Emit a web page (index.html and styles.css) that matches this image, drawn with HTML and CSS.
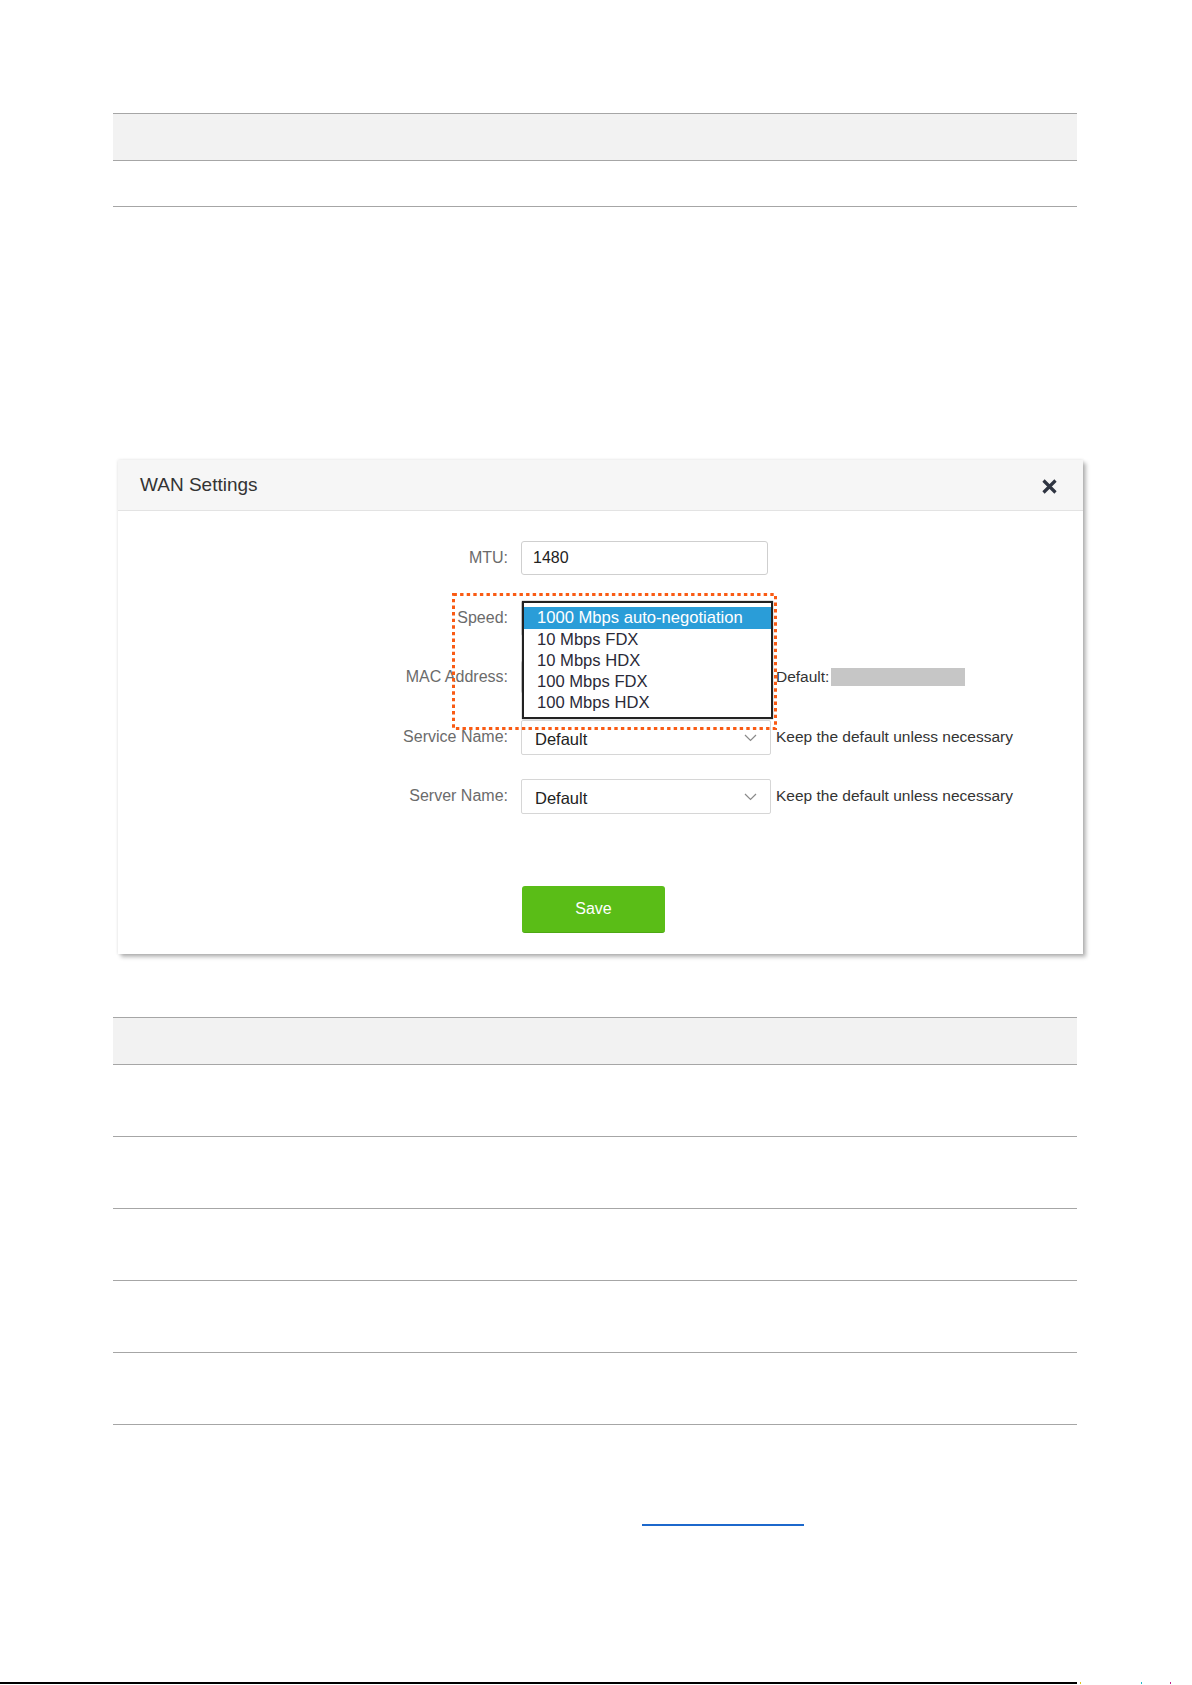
FILE: index.html
```html
<!DOCTYPE html>
<html>
<head>
    <title>WAN Settings</title>
    <meta name="viewport" content="width=device-width, initial-scale=1">
    <link rel="stylesheet" href="styles.css">
</head>
<body>
    <div class="page">
        <div class="doc-table">
            <div class="doc-head"></div>
            <div class="doc-row"></div>
        </div>

        <div class="modal">
            <div class="modal-header">
                <span class="modal-title">WAN Settings</span>
                <svg class="modal-close" width="17" height="17" viewBox="0 0 17 17">
                    <path d="M2.5 2.5L14.5 14.5M14.5 2.5L2.5 14.5"/>
                </svg>
            </div>
            <div class="modal-body">
                <div class="form-row">
                    <label class="form-label" for="mtu">MTU:</label>
                    <input class="field" type="text" id="mtu" value="1480">
                </div>
                <div class="form-row">
                    <label class="form-label">Speed:</label>
                    <div class="control">
                        <div class="select">1000 Mbps auto-negotiation</div>
                        <ul class="speed-list">
                            <li class="selected">1000 Mbps auto-negotiation</li>
                            <li>10 Mbps FDX</li>
                            <li>10 Mbps HDX</li>
                            <li>100 Mbps FDX</li>
                            <li>100 Mbps HDX</li>
                        </ul>
                    </div>
                </div>
                <div class="form-row">
                    <label class="form-label">MAC Address:</label>
                    <div class="control">
                        <div class="field"></div>
                    </div>
                    <span class="hint">Default:</span>
                    <span class="mac-mask"></span>
                </div>
                <div class="form-row">
                    <label class="form-label">Service Name:</label>
                    <div class="control">
                        <div class="select">Default
                            <svg class="chevron" width="13" height="8" viewBox="0 0 13 8"><path d="M1 1L6.5 6.5L12 1"/></svg>
                        </div>
                    </div>
                    <span class="hint">Keep the default unless necessary</span>
                </div>
                <div class="form-row">
                    <label class="form-label">Server Name:</label>
                    <div class="control">
                        <div class="select">Default
                            <svg class="chevron" width="13" height="8" viewBox="0 0 13 8"><path d="M1 1L6.5 6.5L12 1"/></svg>
                        </div>
                    </div>
                    <span class="hint">Keep the default unless necessary</span>
                </div>

                <div class="form-actions">
                    <button type="button" class="btn-save">Save</button>
                </div>

                <svg class="callout" width="325" height="137" viewBox="0 0 325 137">
                    <rect x="1.5" y="1.5" width="322" height="134"/>
                </svg>
            </div>
        </div>

        <div class="doc-table doc-table-tall">
            <div class="doc-head"></div>
            <div class="doc-row"></div>
            <div class="doc-row"></div>
            <div class="doc-row"></div>
            <div class="doc-row"></div>
            <div class="doc-row"></div>
        </div>

        <p class="note"><a class="link" href="#"></a></p>
    </div>

    <div class="footer">
        <div class="footer-rule"></div>
        <span class="speck speck-a"></span>
        <span class="speck speck-b"></span>
        <span class="speck speck-c"></span>
    </div>
</body>
</html>
```

FILE: styles.css
```css
body {
    margin: 0;
    font-family: "Liberation Sans", Arial, sans-serif;
    background: #fff;
    color: #333;
}
.page {
    width: 964px;
    padding: 113px 0 0 113px;
}

/* document tables, text removed */
.doc-table {
    border-top: 1px solid #a6a6a6;
}
.doc-head {
    height: 46px;
    background-color: #f2f2f2;
    border-bottom: 1px solid #a6a6a6;
}
.doc-row {
    height: 45px;
    border-bottom: 1px solid #a6a6a6;
}
.doc-table-tall {
    margin-top: 63px;
}
.doc-table-tall .doc-row {
    height: 71px;
}

/* WAN settings dialog */
.modal {
    width: 965px;
    margin: 253px 0 0 5px;
    background: #fff;
    box-shadow: 0 0 3px rgba(0, 0, 0, 0.12), 3px 3px 4px rgba(0, 0, 0, 0.28);
}
.modal-header {
    height: 50px;
    padding: 0 25px 0 22px;
    display: flex;
    align-items: center;
    justify-content: space-between;
    background-color: #f6f6f6;
    border-bottom: 1px solid #e3e3e3;
}
.modal-title {
    font-size: 19px;
    color: #333;
}
.modal-close {
    margin-top: 2px;
}
.modal-close path {
    fill: none;
    stroke: #2f3542;
    stroke-width: 3.2;
}
.modal-body {
    position: relative;
    padding: 30px 0 21px;
}
.form-row {
    display: flex;
    align-items: center;
    height: 34px;
    margin-bottom: 25.5px;
}
.form-label {
    width: 390px;
    margin-right: 13px;
    text-align: right;
    font-size: 16px;
    color: #6b6b6b;
}
.control {
    position: relative;
    width: 250px;
    height: 34px;
}
.field {
    box-sizing: border-box;
    width: 247px;
    height: 34px;
    padding: 0 11px;
    border: 1px solid #cfcfcf;
    border-radius: 3px;
    font-family: inherit;
    font-size: 16px;
    color: #222;
    outline: none;
}
.select {
    position: relative;
    box-sizing: border-box;
    width: 250px;
    height: 35px;
    padding: 0 13px;
    line-height: 36px;
    border: 1px solid #d6d6d6;
    border-radius: 2px;
    font-size: 16.5px;
    color: #222;
}
.chevron {
    position: absolute;
    right: 13px;
    top: 13px;
}
.chevron path {
    fill: none;
    stroke: #8a8a8a;
    stroke-width: 1.2;
}
.hint {
    margin-left: 5px;
    font-size: 15.5px;
    color: #333;
}
.mac-mask {
    width: 134px;
    height: 18px;
    margin-left: 2px;
    background-color: #c6c6c6;
}

/* open speed list */
.speed-list {
    position: absolute;
    z-index: 2;
    top: 0;
    left: 1px;
    width: 247px;
    margin: 0;
    padding: 4px 0;
    list-style: none;
    background: #fff;
    border: 2px solid #222;
    box-shadow: 0 0 1px #555;
    font-size: 16.6px;
    color: #2a2a38;
}
.speed-list li {
    height: 21px;
    line-height: 21px;
    padding-left: 13px;
}
.speed-list li.selected {
    height: 22px;
    line-height: 22px;
    background-color: #2a9dd8;
    color: #fff;
}

.callout {
    position: absolute;
    z-index: 3;
    left: 334px;
    top: 82px;
}
.callout rect {
    fill: none;
    stroke: #f95b14;
    stroke-width: 3;
    stroke-dasharray: 3.4 3.2;
}

.form-actions {
    margin-top: 73px;
    padding-left: 404px;
}
.btn-save {
    width: 143px;
    height: 47px;
    border: none;
    border-bottom: 1px solid #4ea814;
    border-radius: 3px;
    background-color: #5abd17;
    color: #fff;
    font-family: inherit;
    font-size: 16px;
    cursor: pointer;
}

.note {
    margin: 80px 0 0;
    padding-left: 529px;
    height: 21px;
}
.link {
    display: inline-block;
    width: 162px;
    height: 19px;
    border-bottom: 2px solid #1c68cc;
}

.footer {
    display: flex;
    align-items: flex-end;
    margin-top: 156px;
}
.footer-rule {
    width: 1077px;
    height: 2px;
    background-color: #000;
}
.speck {
    width: 1px;
    height: 2px;
}
.speck-a {
    margin-left: 3px;
    background-color: #e0c020;
}
.speck-b {
    margin-left: 60px;
    background-color: #20b8c8;
}
.speck-c {
    margin-left: 28px;
    background-color: #c0208a;
}
```
